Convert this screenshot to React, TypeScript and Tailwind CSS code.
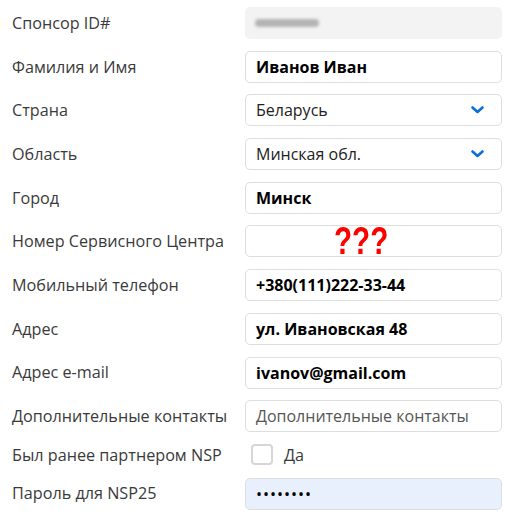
import React from "react";

const font = { fontFamily: '"Open Sans", "Noto Sans", Arial, sans-serif' };

function Chevron() {
  return (
    <svg width="13" height="8" viewBox="0 0 13 8" className="absolute right-[18px] top-[12px]">
      <path d="M1.5 1.5 L6.5 6 L11.5 1.5" fill="none" stroke="#0b6fd8" strokeWidth="2.6" strokeLinecap="round" strokeLinejoin="round" />
    </svg>
  );
}

function Row({ label, children, h = "h-[32px]" }: { label: string; children: React.ReactNode; h?: string }) {
  return (
    <div className={`flex items-center ${h}`}>
      <div className="w-[233px] shrink-0 text-[16.2px] text-[#3a3a3a] whitespace-nowrap">{label}</div>
      <div className="flex-1 h-full relative">{children}</div>
    </div>
  );
}

const box = "h-full w-full rounded-[5px] border border-[#dedede] bg-white flex items-center px-[10px] text-[16px]";

export default function App() {
  return (
    <div className="w-[512px] h-[522px] bg-white pl-[12px] pr-[10px] pt-[7px] flex flex-col gap-[11.7px]" style={font}>
      <Row label="Спонсор ID#">
        <div className="h-full w-full rounded-[5px] bg-[#f3f3f3] flex items-center px-[10px]">
          <div className="w-[64px] h-[8px] rounded-full bg-[#b4b4b4] blur-[1.5px]" />
        </div>
      </Row>
      <Row label="Фамилия и Имя">
        <div className={`${box} font-bold text-black`}>Иванов Иван</div>
      </Row>
      <Row label="Страна">
        <div className={`${box} text-[#222]`}>Беларусь</div>
        <Chevron />
      </Row>
      <Row label="Область">
        <div className={`${box} text-[#222]`}>Минская обл.</div>
        <Chevron />
      </Row>
      <Row label="Город">
        <div className={`${box} font-bold text-black`}>Минск</div>
      </Row>
      <Row label="Номер Сервисного Центра">
        <div className={box} />
        <span
          className="absolute left-[89px] top-[-4px] text-[38px] leading-[40px] font-bold text-[#ff0000] scale-x-[0.78] origin-left"
          style={{ fontFamily: '"Liberation Sans", Arial, sans-serif' }}
        >
          ???
        </span>
      </Row>
      <Row label="Мобильный телефон">
        <div className={`${box} font-bold text-black`}>+380(111)222-33-44</div>
      </Row>
      <Row label="Адрес">
        <div className={`${box} font-bold text-black`}>ул. Ивановская 48</div>
      </Row>
      <Row label="Адрес e-mail">
        <div className={`${box} font-bold text-black`}>ivanov@gmail.com</div>
      </Row>
      <Row label="Дополнительные контакты">
        <div className={`${box} text-[#555]`}>Дополнительные контакты</div>
      </Row>
      <Row label="Был ранее партнером NSP" h="h-[22px]">
        <div className="flex items-center h-full gap-[11px] pl-[6px]">
          <div className="w-[22px] h-[21px] rounded-[4px] border-2 border-[#d6d6d6] bg-white" />
          <span className="text-[16.2px] text-[#3a3a3a]">Да</span>
        </div>
      </Row>
      <Row label="Пароль для NSP25">
        <div className="h-full w-full rounded-[5px] border border-[#dedede] bg-[#e8f0fe] flex items-center px-[10px] text-[16px] text-black tracking-[1px]">
          ••••••••
        </div>
      </Row>
    </div>
  );
}
